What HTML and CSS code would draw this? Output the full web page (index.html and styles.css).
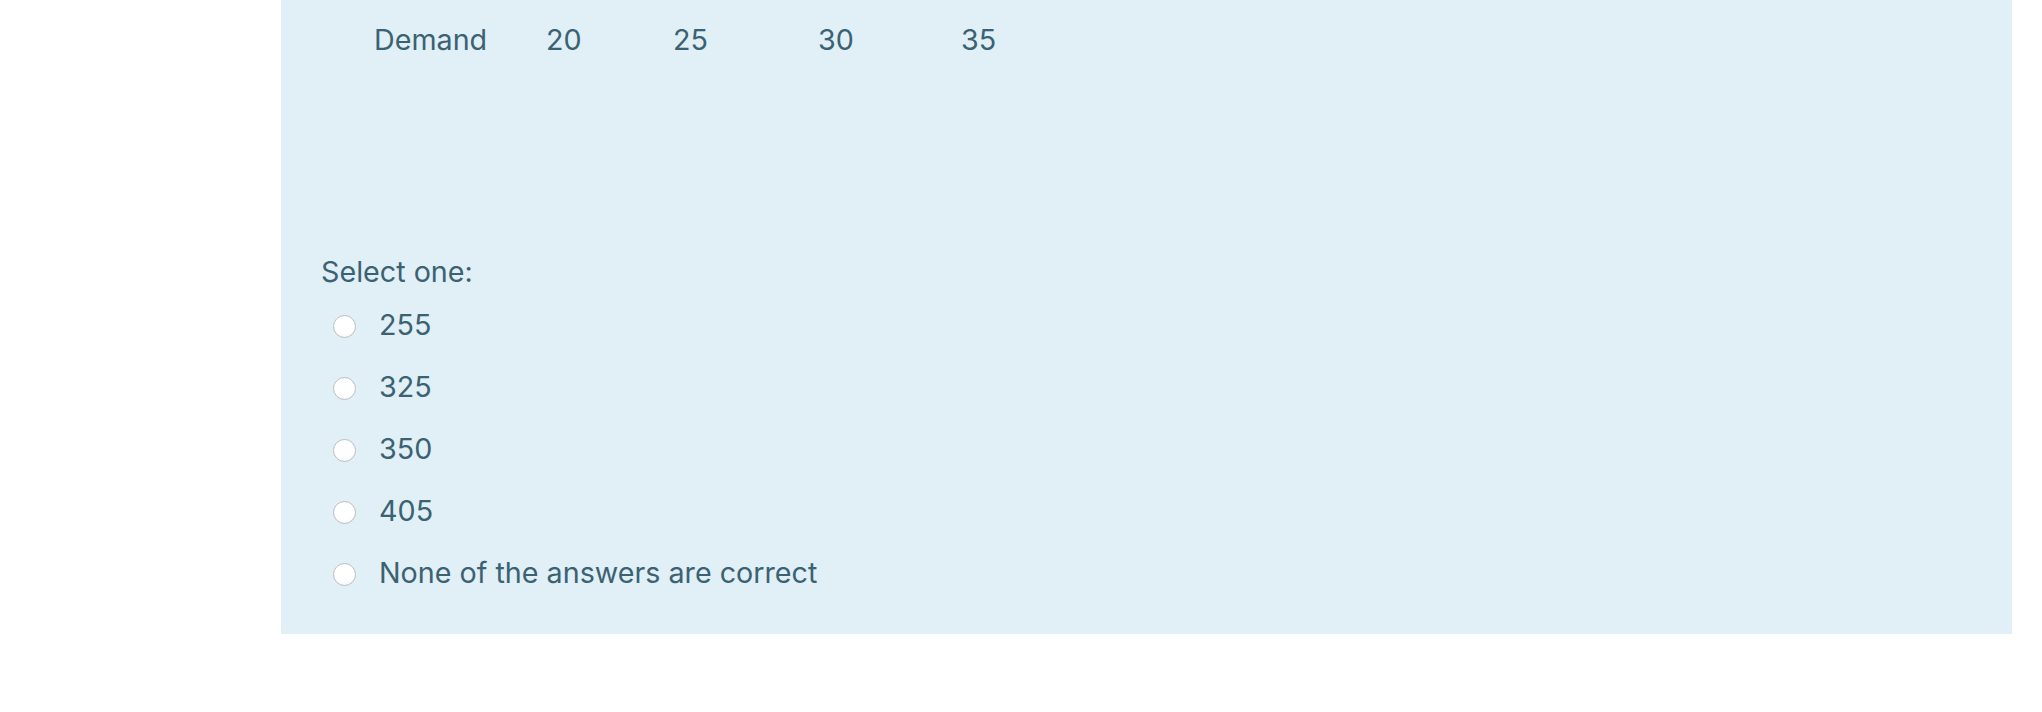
FILE: index.html
```html
<!DOCTYPE html>
<html lang="en">
<head>
<meta charset="utf-8">
<title>Question</title>
<link rel="stylesheet" href="styles.css">
</head>
<body>
<div class="page">
  <div class="formulation">
    <div class="demand-row">
      <span class="cell">Demand</span>
      <span class="cell">20</span>
      <span class="cell">25</span>
      <span class="cell">30</span>
      <span class="cell">35</span>
    </div>
    <div class="prompt">Select one:</div>
    <div class="answers">
      <label class="option"><span class="radio"></span><span class="label-text">255</span></label>
      <label class="option"><span class="radio"></span><span class="label-text">325</span></label>
      <label class="option"><span class="radio"></span><span class="label-text">350</span></label>
      <label class="option"><span class="radio"></span><span class="label-text">405</span></label>
      <label class="option"><span class="radio"></span><span class="label-text">None of the answers are correct</span></label>
    </div>
  </div>
</div>
</body>
</html>
```

FILE: styles.css
```css
html, body {
  margin: 0;
  padding: 0;
  background: #ffffff;
}

body {
  font-family: Inter, "Liberation Sans", Arial, sans-serif;
  font-size: 28.7px;
  color: #3a6272;
}

.page {
  padding-left: 281px;
}

.formulation {
  width: 1731px;
  height: 634px;
  box-sizing: border-box;
  background: #e1eff7;
  padding: 17px 0 0 40px;
}

.demand-row {
  display: grid;
  grid-template-columns: 172px 127px 145px 143px auto;
  margin-left: 53px;
  line-height: 45px;
}

.prompt {
  margin-top: 190px;
  line-height: 40px;
}

.answers {
  display: flex;
  flex-direction: column;
  margin-top: 1px;
}

.option {
  display: flex;
  align-items: center;
  height: 62.1px;
  line-height: 45px;
}

.radio {
  flex: none;
  width: 23px;
  height: 23px;
  box-sizing: border-box;
  border-radius: 50%;
  border: 1px solid #bcbfc2;
  background: radial-gradient(circle at 50% 35%, #ffffff 0%, #ffffff 60%, #eeeeee 100%);
  margin: 5px 0 0 12px;
}

.label-text {
  margin-left: 23px;
}
```
